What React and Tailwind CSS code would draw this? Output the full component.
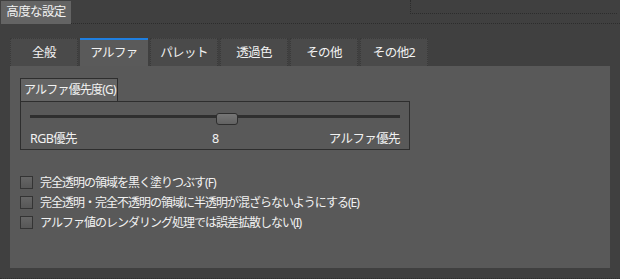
import { useState } from "react";

const tabs = ["全般", "アルファ", "パレット", "透過色", "その他", "その他2"];

const options = [
    "完全透明の領域を黒く塗りつぶす(F)",
    "完全透明・完全不透明の領域に半透明が混ざらないようにする(E)",
    "アルファ値のレンダリング処理では誤差拡散しない(I)",
];

export default function App() {
    const [active, setActive] = useState(1);
    const [value] = useState(8);
    const [checked, setChecked] = useState([false, false, false]);

    return (
        <div
            className="w-[620px] h-[279px] bg-[#404040] overflow-hidden text-[#f2f2f2] flex flex-col border-b border-dotted border-[#2f2f2f]"
            style={{ fontFamily: '"Noto Sans", "Noto Sans CJK JP", sans-serif' }}
        >
            {/* header strip */}
            <div className="flex items-start h-[25px] shrink-0">
                <div className="mt-[1px] ml-[1px] w-[70px] h-[23px] bg-[#646464] flex items-center justify-center text-[12.5px] tracking-[-0.6px]">
                    高度な設定
                </div>
                <div className="flex-1 h-[24px] border-b border-dotted border-[#2c2c2c] flex justify-end">
                    <div className="w-[207px] h-[14px] mr-[3px] border-l border-b border-dotted border-[#2c2c2c]" />
                </div>
            </div>

            <div className="pt-[13px] px-[10px] flex flex-col">
                {/* tab row */}
                <div className="flex gap-[2px] h-[28px]">
                    {tabs.map((t, i) => (
                        <button
                            key={t}
                            onClick={() => setActive(i)}
                            className={`w-[68px] h-[28px] flex items-center justify-center text-[12.5px] tracking-[-0.6px] ${
                                active === i
                                    ? "bg-[#5a5a5a] border-t-2 border-[#1f7fe0] pt-[1px]"
                                    : "bg-[#4a4a4a] border-t border-x border-dotted border-[#3a3a3a] pt-[2px]"
                            }`}
                        >
                            {t}
                        </button>
                    ))}
                </div>

                {/* panel */}
                <div className="w-[600px] h-[202px] bg-[#595959] pt-[12px] px-[10px] flex flex-col">
                    <div className="w-[390px] flex flex-col">
                        <div className="self-start w-[98px] h-[23px] bg-[#646464] border-t border-x border-[#2e2e2e] flex items-center pl-[3px] text-[12px] tracking-[-0.8px] whitespace-nowrap overflow-hidden">
                            アルファ優先度(G)
                        </div>
                        <div className="h-[49px] border border-[#2e2e2e] px-[9px] pt-[10px] flex flex-col">
                            <div className="relative h-[14px] flex items-center">
                                <div className="w-full h-[3px] bg-[#2f2f2f]" />
                                <div
                                    className="absolute top-[1px] w-[22px] h-[12px] rounded-[3px] border border-[#2e2e2e] bg-gradient-to-b from-[#767676] to-[#626262]"
                                    style={{ left: `${(value / 15) * 370 - 11}px` }}
                                />
                            </div>
                            <div className="flex items-center mt-[10px] text-[12.5px] tracking-[-0.6px]">
                                <span className="w-[182px]">RGB優先</span>
                                <span>{value}</span>
                                <span className="ml-auto">アルファ優先</span>
                            </div>
                        </div>
                    </div>

                    {/* options */}
                    <div className="mt-[26px] flex flex-col gap-[7px]">
                        {options.map((o, i) => (
                            <label key={o} className="flex items-center gap-[7px] h-[13px] cursor-pointer">
                                <span
                                    onClick={() => setChecked(checked.map((c, j) => (j === i ? !c : c)))}
                                    className="w-[13px] h-[13px] border border-[#343434] bg-gradient-to-b from-[#666666] to-[#575757] flex items-center justify-center text-[10px] leading-none"
                                >
                                    {checked[i] ? "✓" : ""}
                                </span>
                                <span className="text-[12px] tracking-[-1px] leading-none">{o}</span>
                            </label>
                        ))}
                    </div>
                </div>
            </div>
        </div>
    );
}
